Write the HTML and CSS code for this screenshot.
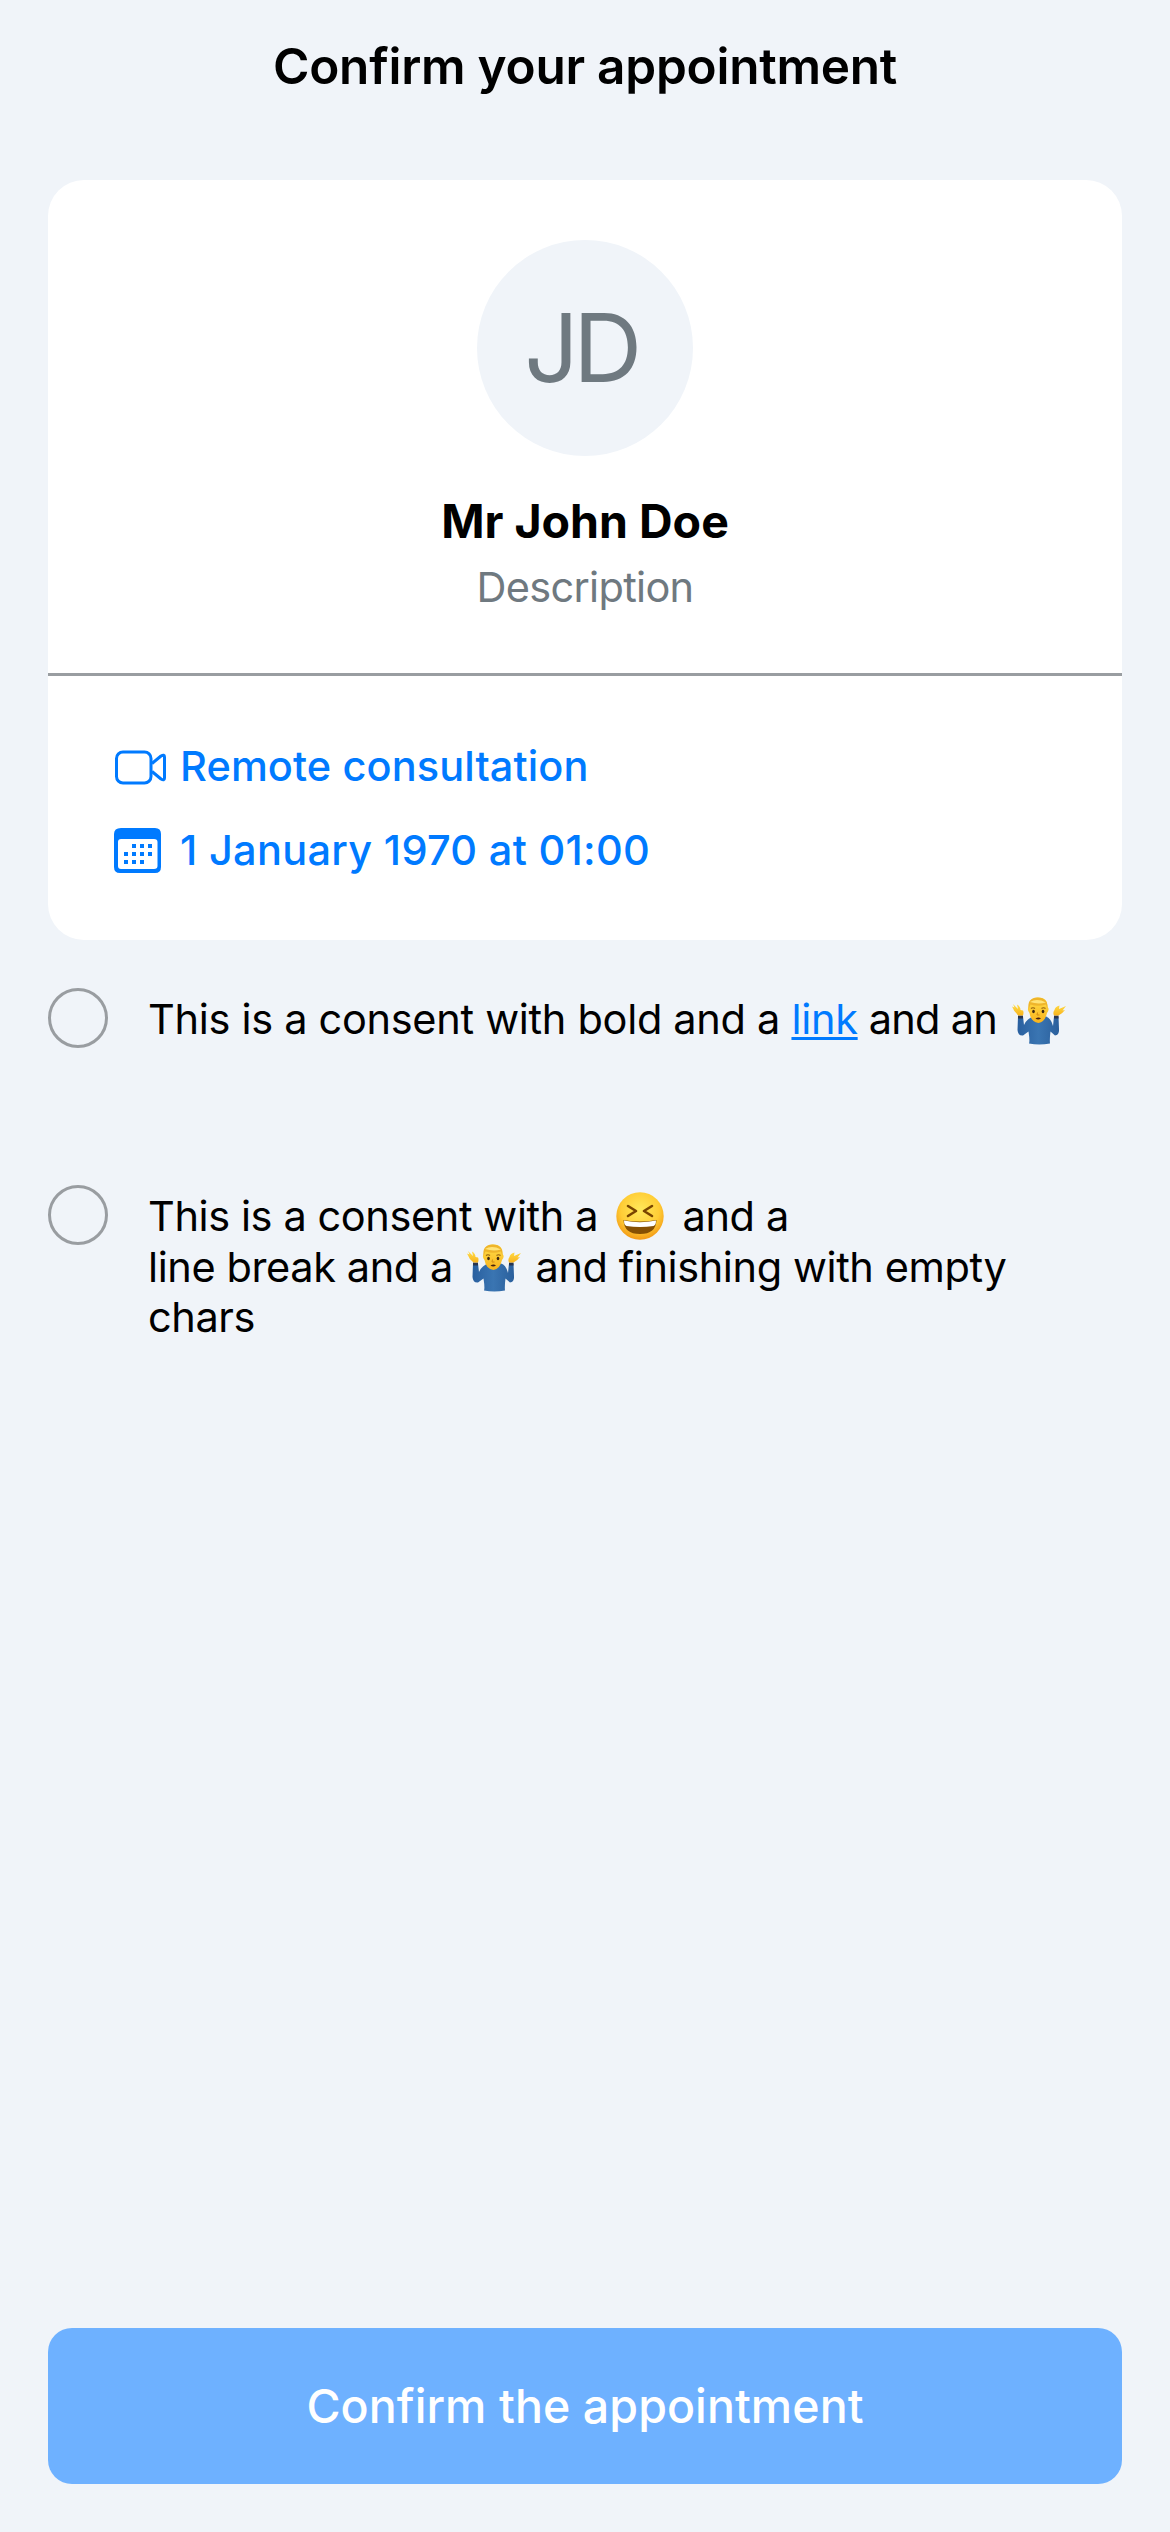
FILE: index.html
```html
<!DOCTYPE html>
<html lang="en">
<head>
<meta charset="utf-8">
<title>Confirm your appointment</title>
<link rel="stylesheet" href="styles.css">
</head>
<body>
<svg class="defs" width="0" height="0" aria-hidden="true">
  <defs>
    <linearGradient id="skin" x1="0" y1="0" x2="0" y2="1"><stop offset="0" stop-color="#ffdf4a"/><stop offset="1" stop-color="#f9b31c"/></linearGradient>
    <linearGradient id="sweater" x1="0" y1="0" x2="1" y2="0"><stop offset="0" stop-color="#295f9f"/><stop offset=".5" stop-color="#3a75b2"/><stop offset="1" stop-color="#2a5f9c"/></linearGradient>
    <radialGradient id="face" cx=".5" cy=".38" r=".62"><stop offset="0" stop-color="#ffe95c"/><stop offset=".65" stop-color="#ffcd36"/><stop offset="1" stop-color="#f39a16"/></radialGradient>
    <symbol id="shrug" viewBox="0 0 54 48">
      <path d="M6 19.500 5.500 33Q6 39 11 38.500L16.500 34.500Q18 44 17 46.500Q27 48.500 38 46.500Q37.500 42 38.500 34.500L43 38.500Q47.500 38 47 32L46.500 19.500H42L41 29Q39 21 34 19.500H22Q15 21 12 28L11 19.500Z" fill="url(#sweater)"/>
      <path d="M6 18.500H11V21.500H6ZM42 18.500H46.500V21.500H42Z" fill="#29344f"/>
      <path d="M6.500 18.500Q2 15 0 9.500L2.500 10.500L1 7L6 12L5 7.500Q8.500 9.500 8.500 13L11 13.500Q12 15.500 11 18.500ZM42 18.500Q40.500 15.500 42.500 13Q43 9.500 47.500 8.500L47 12L54 9L50.500 13.500L53 13Q50 17 46.500 18.500Z" fill="url(#skin)"/>
      <path d="M17 10Q16 1 25.500 .5Q36 0 35.500 10Q38 12 35 16Q33 25 26.500 26Q19 25 17.500 16Q14.500 12 17 10Z" fill="url(#skin)"/>
      <path d="M16.500 12Q15 1 25 .4Q36.500 0 35.500 12L34 7.500Q26 10 18.500 7.500Z" fill="#efb52b"/>
      <path d="M18 5Q25 1 34 5.500Q26 7.500 18 5Z" fill="#ffe478"/>
      <path d="M19 11.500Q21 10 23 11.500M29.500 11.500Q31.500 10 33.500 11.500" fill="none" stroke="#946311" stroke-width="1.200"/>
      <ellipse cx="21.500" cy="14.500" rx="1.300" ry="1.700" fill="#3b2813"/><ellipse cx="31" cy="14.500" rx="1.300" ry="1.700" fill="#3b2813"/>
      <path d="M23.500 21.500Q26.500 19.500 29 21.500Q26 23.500 23.500 21.500" fill="#49230e"/><path d="M25.500 15.500L25 18H27.500" fill="none" stroke="#d18b12" stroke-width="1"/>
    </symbol>
  </defs>
</svg>
<main class="screen">
  <h1 class="title">Confirm your appointment</h1>
  <section class="card">
    <div class="profile">
      <div class="avatar">JD</div>
      <div class="name">Mr John Doe</div>
      <div class="description">Description</div>
    </div>
    <div class="details">
      <div class="row">
        <svg class="icon" width="54" height="48" viewBox="0 0 54 48" fill="none" stroke="#007aff" stroke-width="3" stroke-linejoin="round"><rect x="2.500" y="10" width="34.500" height="31" rx="6.500"/><path d="M38 21.500 47 14Q50.500 12 50.500 15V36Q50.500 39 47 37L38 29.500"/></svg>
        <span class="remote">Remote consultation</span>
      </div>
      <div class="row">
        <svg class="icon" width="54" height="48" viewBox="0 0 54 48"><path fill="#007aff" fill-rule="evenodd" d="M7 2H41Q47 2 47 8V41Q47 47 41 47H6Q0 47 0 41V8Q0 2 7 2ZM7 13Q4 13 4 16V40Q4 43 7 43H40Q43.500 43 43.500 40V16Q43.500 13 40 13Z"/><path fill="#007aff" d="M18 18h4v4h-4zM26 18h4v4h-4zM34 18h4v4h-4zM10 26h4v4h-4zM18 26h4v4h-4zM26 26h4v4h-4zM34 26h4v4h-4zM10 34h4v4h-4zM18 34h4v4h-4zM26 34h4v4h-4z"/></svg>
        <span class="date">1 January 1970 at 01:00</span>
      </div>
    </div>
  </section>
  <div class="consent first">
    <span class="radio"></span>
    <p class="copy">This is a consent with bold and a <a class="link">link</a><span class="tail"> and an </span><svg class="emoji shrug-end" width="54" height="48"><use href="#shrug"/></svg></p>
  </div>
  <div class="consent second">
    <span class="radio"></span>
    <p class="copy">This is a consent with a <svg class="emoji laugh" width="48" height="48" viewBox="0 0 48 48"><circle cx="24" cy="24" r="23.700" fill="url(#face)"/><path d="M12 14 20 19 12 24M36 14 28 19 36 24" fill="none" stroke="#794500" stroke-width="2.600" stroke-linejoin="round" stroke-linecap="round"/><path d="M7.500 28Q24 31 40.500 28Q40 42 24 42Q8 42 7.500 28Z" fill="#865003"/><path d="M8 28.500Q24 32 40 28.500Q40 33 37.500 34Q24 36 10.500 34Q8 33 8 28.500Z" fill="#fff"/></svg> and a<br>line break and a <svg class="emoji shrug-mid" width="54" height="48"><use href="#shrug"/></svg> and finishing with empty<br>chars</p>
  </div>
  <button class="confirm">Confirm the appointment</button>
</main>
</body>
</html>
```
FILE: styles.css
```css
* { box-sizing: border-box; }
body { margin: 0; background: #f0f4f9; font-family: Inter, "Liberation Sans", sans-serif; color: #000; }
.defs { display: block; height: 0; }
.screen { width: 1170px; height: 2532px; display: flex; flex-direction: column; padding: 0 48px 48px; }
.title { margin: 0; height: 132px; line-height: 132px; font-size: 49.500px; font-weight: 600; letter-spacing: -0.250px; text-align: center; }
.card { margin-top: 48px; height: 760px; border-radius: 36px; background: #fff; }
.profile { height: 496px; padding-top: 60px; border-bottom: 3px solid #999da1; display: flex; flex-direction: column; align-items: center; }
.avatar { width: 216px; height: 216px; padding-right: 9px; border-radius: 50%; background: #f0f4f9; color: #6f7980; font-size: 95.500px; line-height: 214px; letter-spacing: -5.500px; text-align: center; }
.name { margin-top: 35px; height: 60px; line-height: 60px; font-size: 46.500px; font-weight: 700; }
.description { margin-top: 9px; height: 54px; line-height: 54px; font-size: 41.500px; letter-spacing: -0.700px; color: #6f7980; }
.details { padding: 63px 66px 0; display: flex; flex-direction: column; gap: 30px; color: #007aff; font-size: 41.500px; font-weight: 500; }
.row { height: 54px; line-height: 54px; display: flex; align-items: center; gap: 12px; white-space: nowrap; }
.icon { flex: none; }
.remote { letter-spacing: 0.100px; }
.date { letter-spacing: 0.300px; }
.consent { display: flex; align-items: flex-start; gap: 40px; font-size: 41.500px; line-height: 50.500px; letter-spacing: -0.400px; }
.first { margin-top: 48px; height: 197px; letter-spacing: -0.300px; }
.tail { letter-spacing: -0.700px; }
.radio { flex: none; width: 60px; height: 60px; border: 3px solid #999da1; border-radius: 50%; }
.copy { margin: 6px 0 0; white-space: nowrap; }
.link { color: #007aff; text-decoration: underline; text-decoration-thickness: 3px; text-underline-offset: 3px; text-decoration-skip-ink: none; }
.emoji { vertical-align: top; }
.shrug-end { margin: 3px 0 -4px 4px; }
.shrug-mid { margin: 2px 3px -3px 3px; }
.laugh { margin: 1px 7px 0; }
.confirm { margin-top: auto; height: 156px; flex: none; border: 0; border-radius: 24px; background: #6eb1ff; color: #fff; font-family: inherit; font-size: 46.500px; font-weight: 500; letter-spacing: 0.080px; }
```
